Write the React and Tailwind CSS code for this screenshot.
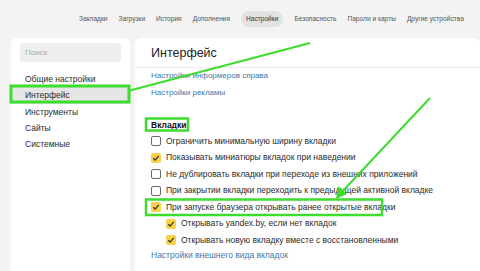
import React from "react";

const nav = ["Закладки", "Загрузки", "История", "Дополнения", "Настройки", "Безопасность", "Пароли и карты", "Другие устройства"];
const menu = ["Общие настройки", "Интерфейс", "Инструменты", "Сайты", "Системные"];

const rows = [
  { text: "Ограничить минимальную ширину вкладки", on: false },
  { text: "Показывать миниатюры вкладок при наведении", on: true },
  { text: "Не дублировать вкладки при переходе из внешних приложений", on: false },
  { text: "При закрытии вкладки переходить к предыдущей активной вкладке", on: false },
  { text: "При запуске браузера открывать ранее открытые вкладки", on: true },
  { text: "Открывать yandex.by, если нет вкладок", on: true, sub: true },
  { text: "Открывать новую вкладку вместе с восстановленными", on: true, sub: true },
];

function Check({ on }) {
  if (!on) {
    return <span className="w-[10px] h-[10px] shrink-0 border border-[#6b6b6b] rounded-[2px] bg-white" />;
  }
  return (
    <span className="w-[10px] h-[10px] shrink-0 rounded-[2px] bg-[#f8d34a] flex items-center justify-center">
      <svg width="8" height="8" viewBox="0 0 8 8">
        <path d="M1.2 4.2 L3.2 6 L6.8 1.8" fill="none" stroke="#3a3a3a" strokeWidth="1.3" />
      </svg>
    </span>
  );
}

export default function App() {
  return (
    <div className="relative w-[480px] h-[271px] overflow-hidden bg-[#f3f3f3] font-['Liberation_Sans',Arial,sans-serif]">
      <nav className="h-[38px] flex items-center pl-[79px] gap-[11px] text-[6.6px] text-[#555] whitespace-nowrap">
        {nav.map((n) =>
          n === "Настройки" ? (
            <span key={n} className="shrink-0 px-[5px] py-[3px] rounded-full bg-[#e2e2e2] text-[#333]">
              {n}
            </span>
          ) : (
            <span key={n} className="shrink-0">{n}</span>
          )
        )}
      </nav>

      <div className="flex gap-[5px] pl-[11px]">
        <aside className="w-[119px] h-[240px] bg-white rounded-t-[6px] pt-[5px]">
          <div className="mx-[9px] h-[19px] rounded-[3px] bg-[#efefef] flex items-center pl-[5px] text-[8px] text-[#a8a8a8]">
            Поиск
          </div>
          <ul className="mt-[9px] text-[8.5px] text-[#2b2b2b]">
            {menu.map((m) => (
              <li
                key={m}
                className={"h-[16.4px] flex items-center px-[14px] " + (m === "Интерфейс" ? "bg-[#e6e6e6]" : "")}
              >
                {m}
              </li>
            ))}
          </ul>
        </aside>

        <main className="flex-1 h-[240px] bg-white rounded-t-[6px] pt-[8px]">
          <h1 className="pl-[16px] text-[12.5px] leading-[15px] text-[#222]">Интерфейс</h1>
          <div className="mt-[6px] border-t border-[#ececec]" />
          <div className="pl-[16px] text-[8px] text-[#3f78a8]">
            <div className="h-[16.5px] flex items-center">Настройки информеров справа</div>
            <div className="h-[16.5px] flex items-center">Настройки рекламы</div>
          </div>
          <div className="pl-[16px] mt-[16px] text-[8.5px] text-[#2b2b2b]">
            <div className="h-[16px] flex items-center font-bold text-[#111]">Вкладки</div>
            {rows.map((r) => (
              <div
                key={r.text}
                className={"h-[16.5px] flex items-center gap-[5px] " + (r.sub ? "pl-[15px]" : "")}
              >
                <Check on={r.on} />
                <span>{r.text}</span>
              </div>
            ))}
            <div className="h-[14px] flex items-center text-[#3f78a8]">Настройки внешнего вида вкладок</div>
          </div>
        </main>
      </div>

      <svg className="absolute inset-0 pointer-events-none" width="480" height="271" viewBox="0 0 480 271">
        <g stroke="#3ddc2e" fill="none">
          <rect x="11" y="86" width="118" height="16" strokeWidth="3" />
          <rect x="146" y="118.5" width="42" height="12" strokeWidth="2.5" />
          <rect x="146" y="199.5" width="236" height="15.5" strokeWidth="2.5" />
          <line x1="128" y1="91" x2="310" y2="43" strokeWidth="2" />
          <line x1="430" y1="98" x2="341" y2="193" strokeWidth="2" />
        </g>
        <path d="M336 199 L338 186 L347 194 Z" fill="#3ddc2e" />
      </svg>
    </div>
  );
}
